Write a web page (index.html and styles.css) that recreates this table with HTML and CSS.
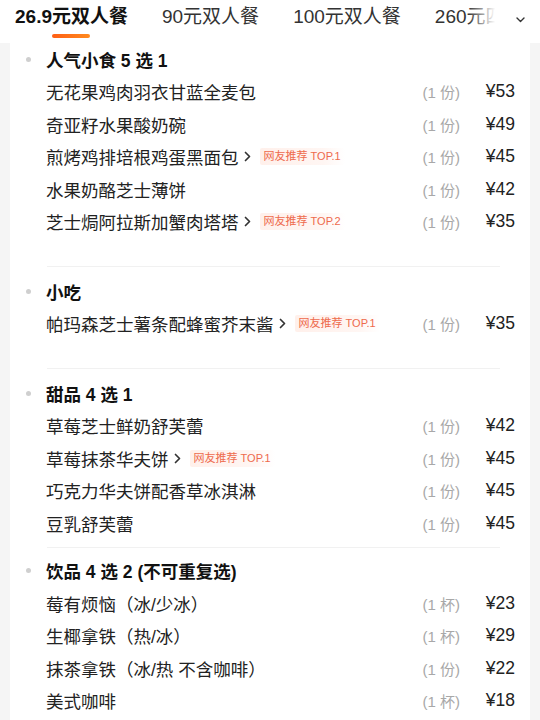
FILE: index.html
```html
<!DOCTYPE html>
<html lang="zh-CN">
<head>
<meta charset="utf-8">
<title>套餐详情</title>
<link rel="stylesheet" href="styles.css">
</head>
<body>
<header class="tabs">
  <nav class="tab-list">
    <div class="tab active">26.9元双人餐</div>
    <div class="tab">90元双人餐</div>
    <div class="tab">100元双人餐</div>
    <div class="tab">260元四人餐</div>
  </nav>
  <div class="tab-fade"></div>
  <div class="tab-more">
    <svg width="9" height="6" viewBox="0 0 9 6"><path d="M1 1 L4.5 4.5 L8 1" fill="none" stroke="#333" stroke-width="1.4" stroke-linecap="round" stroke-linejoin="round"/></svg>
  </div>
</header>

<main class="card">
  <section class="group">
    <h2 class="group-title">人气小食 5 选 1</h2>
    <ul class="items">
      <li class="item"><div class="name-wrap"><span class="name">无花果鸡肉羽衣甘蓝全麦包</span></div><span class="qty">(1 份)</span><span class="price">¥53</span></li>
      <li class="item"><div class="name-wrap"><span class="name">奇亚籽水果酸奶碗</span></div><span class="qty">(1 份)</span><span class="price">¥49</span></li>
      <li class="item"><div class="name-wrap"><span class="name">煎烤鸡排培根鸡蛋黑面包</span><svg class="chev" width="7" height="11" viewBox="0 0 7 11"><path d="M1.5 1.5 L5.5 5.5 L1.5 9.5" fill="none" stroke="#333" stroke-width="1.7" stroke-linecap="round" stroke-linejoin="round"/></svg><span class="tag">网友推荐 TOP.1</span></div><span class="qty">(1 份)</span><span class="price">¥45</span></li>
      <li class="item"><div class="name-wrap"><span class="name">水果奶酪芝士薄饼</span></div><span class="qty">(1 份)</span><span class="price">¥42</span></li>
      <li class="item"><div class="name-wrap"><span class="name">芝士焗阿拉斯加蟹肉塔塔</span><svg class="chev" width="7" height="11" viewBox="0 0 7 11"><path d="M1.5 1.5 L5.5 5.5 L1.5 9.5" fill="none" stroke="#333" stroke-width="1.7" stroke-linecap="round" stroke-linejoin="round"/></svg><span class="tag">网友推荐 TOP.2</span></div><span class="qty">(1 份)</span><span class="price">¥35</span></li>
    </ul>
  </section>
  <div class="divider divider-loose"></div>

  <section class="group">
    <h2 class="group-title">小吃</h2>
    <ul class="items">
      <li class="item"><div class="name-wrap"><span class="name">帕玛森芝士薯条配蜂蜜芥末酱</span><svg class="chev" width="7" height="11" viewBox="0 0 7 11"><path d="M1.5 1.5 L5.5 5.5 L1.5 9.5" fill="none" stroke="#333" stroke-width="1.7" stroke-linecap="round" stroke-linejoin="round"/></svg><span class="tag">网友推荐 TOP.1</span></div><span class="qty">(1 份)</span><span class="price">¥35</span></li>
    </ul>
  </section>
  <div class="divider divider-loose"></div>

  <section class="group">
    <h2 class="group-title">甜品 4 选 1</h2>
    <ul class="items">
      <li class="item"><div class="name-wrap"><span class="name">草莓芝士鲜奶舒芙蕾</span></div><span class="qty">(1 份)</span><span class="price">¥42</span></li>
      <li class="item"><div class="name-wrap"><span class="name">草莓抹茶华夫饼</span><svg class="chev" width="7" height="11" viewBox="0 0 7 11"><path d="M1.5 1.5 L5.5 5.5 L1.5 9.5" fill="none" stroke="#333" stroke-width="1.7" stroke-linecap="round" stroke-linejoin="round"/></svg><span class="tag">网友推荐 TOP.1</span></div><span class="qty">(1 份)</span><span class="price">¥45</span></li>
      <li class="item"><div class="name-wrap"><span class="name">巧克力华夫饼配香草冰淇淋</span></div><span class="qty">(1 份)</span><span class="price">¥45</span></li>
      <li class="item"><div class="name-wrap"><span class="name">豆乳舒芙蕾</span></div><span class="qty">(1 份)</span><span class="price">¥45</span></li>
    </ul>
  </section>
  <div class="divider"></div>

  <section class="group">
    <h2 class="group-title">饮品 4 选 2 (不可重复选)</h2>
    <ul class="items">
      <li class="item"><div class="name-wrap"><span class="name">莓有烦恼（冰/少冰）</span></div><span class="qty">(1 杯)</span><span class="price">¥23</span></li>
      <li class="item"><div class="name-wrap"><span class="name">生椰拿铁（热/冰）</span></div><span class="qty">(1 杯)</span><span class="price">¥29</span></li>
      <li class="item"><div class="name-wrap"><span class="name">抹茶拿铁（冰/热 不含咖啡）</span></div><span class="qty">(1 份)</span><span class="price">¥22</span></li>
      <li class="item"><div class="name-wrap"><span class="name">美式咖啡</span></div><span class="qty">(1 杯)</span><span class="price">¥18</span></li>
    </ul>
  </section>
</main>
</body>
</html>
```

FILE: styles.css
```css
* {
  box-sizing: border-box;
}

html, body {
  margin: 0;
  padding: 0;
}

body {
  background: #f5f5f5;
  font-family: "Liberation Sans", "Noto Sans CJK SC", sans-serif;
  color: #222;
  height: 720px;
  overflow: hidden;
}

/* ---------- tabs ---------- */
.tabs {
  position: relative;
  height: 43px;
  background: #fff;
  overflow: hidden;
}

.tab-list {
  display: flex;
  gap: 34px;
  padding-left: 15px;
  height: 43px;
  white-space: nowrap;
}

.tab {
  position: relative;
  font-size: 19px;
  line-height: 34px;
  color: #333;
  flex-shrink: 0;
}

.tab.active {
  font-weight: 700;
  color: #111;
}

.tab.active::after {
  content: "";
  position: absolute;
  left: 50%;
  top: 34px;
  width: 38px;
  height: 4px;
  margin-left: -19px;
  border-radius: 2px;
  background: linear-gradient(90deg, #ff5e14, #ff8a1e);
}

.tab-fade {
  position: absolute;
  top: 0;
  right: 40px;
  width: 32px;
  height: 43px;
  background: linear-gradient(90deg, rgba(255,255,255,0), #fff 85%);
}

.tab-more {
  position: absolute;
  top: 0;
  right: 0;
  width: 40px;
  height: 43px;
  background: #fff;
  display: flex;
  justify-content: center;
  padding-top: 17px;
}

/* ---------- card ---------- */
.card {
  margin: 0 10px;
  background: #fff;
  padding: 0 15px 0 36px;
  min-height: 677px;
}

.group {
  margin: 0;
}

.group-title {
  display: flex;
  align-items: center;
  margin: 0 0 0 -20px;
  height: 32.5px;
  font-size: 17.5px;
  font-weight: 700;
  color: #111;
}

.group-title::before {
  content: "";
  width: 5px;
  height: 5px;
  border-radius: 50%;
  background: #cfcfcf;
  margin-right: 15px;
  flex-shrink: 0;
}

.items {
  list-style: none;
  margin: 0;
  padding: 0;
}

.item {
  display: flex;
  align-items: center;
  height: 32.5px;
}

.name-wrap {
  flex: 1;
  display: flex;
  align-items: center;
  min-width: 0;
}

.name {
  font-size: 17.5px;
  color: #222;
  white-space: nowrap;
}

.chev {
  margin-left: 5px;
  flex-shrink: 0;
}

.tag {
  margin-left: 9px;
  padding: 1px 4px;
  font-size: 11px;
  line-height: 15px;
  color: #ee6a4c;
  border-radius: 2px;
  background: linear-gradient(90deg, #fff0eb, #fff6f3 75%, rgba(255,255,255,0));
  white-space: nowrap;
}

.qty {
  font-size: 15px;
  color: #a8a8a8;
  white-space: nowrap;
  margin-right: 15px;
}

.price {
  width: 40px;
  text-align: right;
  font-size: 17.5px;
  color: #222;
}

.divider {
  height: 1px;
  background: #f1f1f1;
  margin: 7px 15px 7px 1px;
}

.divider-loose {
  margin-top: 28px;
  margin-bottom: 8px;
}
```
